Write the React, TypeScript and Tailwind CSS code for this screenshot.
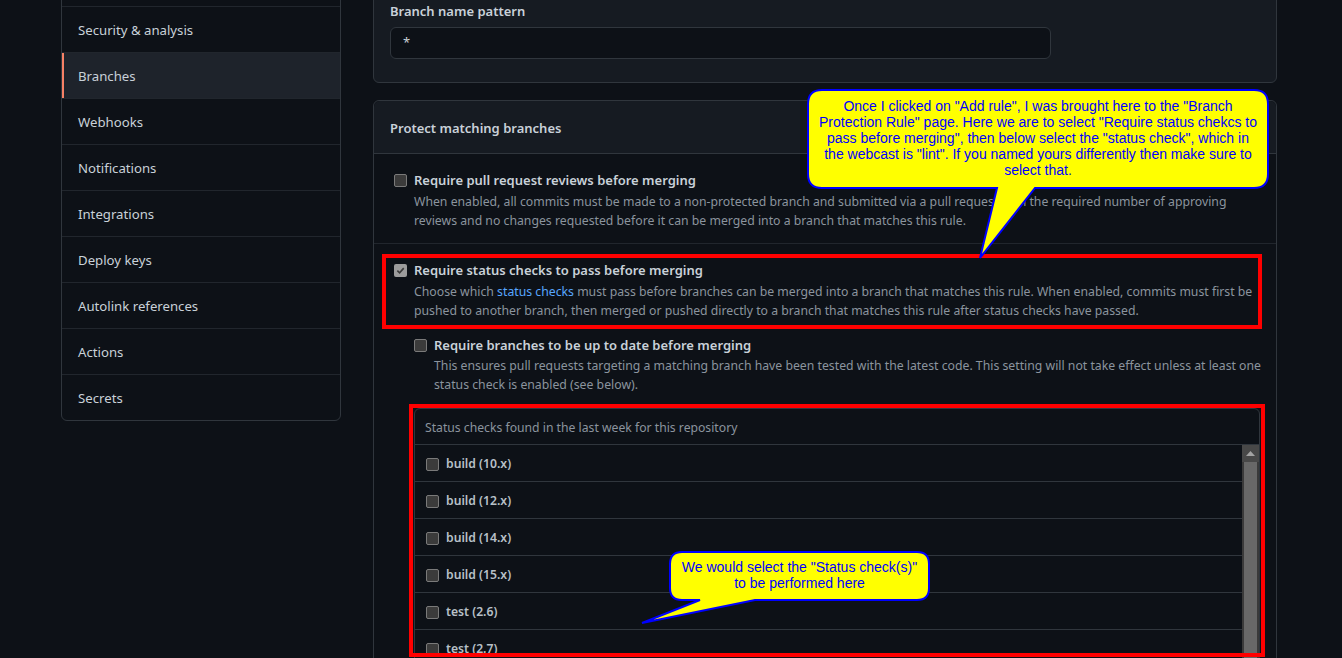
import React from "react";

const FONT = '"Noto Sans", "Open Sans", sans-serif';

function Box({ checked = false }: { checked?: boolean }) {
  if (checked) {
    return (
      <span className="flex h-[13px] w-[13px] shrink-0 items-center justify-center rounded-[2px] bg-[#9c9c9c]">
        <svg width="9" height="9" viewBox="0 0 10 10">
          <path d="M1.5 5.2 L4 7.6 L8.6 2.4" fill="none" stroke="#3a3a3a" strokeWidth="1.8" />
        </svg>
      </span>
    );
  }
  return <span className="block h-[13px] w-[13px] shrink-0 rounded-[2px] border border-[#7a7a7a] bg-[#3b3b3b]" />;
}

const sideItems = [
  "Security & analysis",
  "Branches",
  "Webhooks",
  "Notifications",
  "Integrations",
  "Deploy keys",
  "Autolink references",
  "Actions",
  "Secrets",
];

const checks = ["build (10.x)", "build (12.x)", "build (14.x)", "build (15.x)", "test (2.6)", "test (2.7)", "lint", "test (3.0)"];

export default function App() {
  return (
    <div className="relative h-[658px] overflow-hidden bg-[#0d1117] text-[#c9d1d9]" style={{ fontFamily: FONT }}>
      <div className="flex items-start gap-[32px] pl-[61px]">
        {/* Sidebar */}
        <nav className="mt-[-40px] w-[280px] shrink-0 overflow-hidden rounded-md border border-[#30363d]">
          <div className="h-[45px]" />
          {sideItems.map((s) => (
            <div
              key={s}
              className={`relative flex h-[46px] items-center border-t border-[#21262d] px-4 pt-[2px] text-[13.2px] ${
                s === "Branches" ? "bg-[#1e232b]" : ""
              }`}
            >
              {s === "Branches" && <span className="absolute bottom-0 left-0 top-0 w-[2px] bg-[#f78166]" />}
              {s}
            </div>
          ))}
        </nav>

        {/* Main */}
        <main className="mt-[-16px] w-[904px] shrink-0">
          <div className="rounded-b-md border border-[#30363d] bg-[#161b22] px-4 pb-[23px] pt-4">
            <div className="mb-[5px] text-[13px] font-semibold leading-[21px]">Branch name pattern</div>
            <div className="flex h-[32px] w-[661px] items-center rounded-md border border-[#30363d] bg-[#0d1117] px-3 text-[13px]">
              *
            </div>
          </div>

          <div className="mt-[17px] rounded-t-md border border-[#30363d]">
            <div className="flex h-[53px] items-center rounded-t-md border-b border-[#30363d] bg-[#161b22] px-4 pt-[4px] text-[13px] font-semibold">
              Protect matching branches
            </div>

            {/* Row 1 */}
            <div className="flex border-b border-[#21262d] pb-[13px] pl-5 pr-4 pt-4">
              <div className="mr-[7px] mt-[4px]">
                <Box />
              </div>
              <div className="min-w-0 flex-1">
                <div className="text-[13px] font-semibold leading-[21px]">Require pull request reviews before merging</div>
                <div className="mt-[1px] whitespace-nowrap text-[12.25px] leading-[19px] text-[#8b949e]">
                  <div>
                    When enabled, all commits must be made to a non-protected branch and submitted via a pull request with the required number of approving
                  </div>
                  <div>reviews and no changes requested before it can be merged into a branch that matches this rule.</div>
                </div>
              </div>
            </div>

            {/* Row 2 */}
            <div className="flex pl-5 pr-4 pt-[16px]">
              <div className="mr-[7px] mt-[4px]">
                <Box checked />
              </div>
              <div className="min-w-0 flex-1">
                <div className="text-[13px] font-semibold leading-[21px]">Require status checks to pass before merging</div>
                <div className="mt-[1px] whitespace-nowrap text-[12.25px] leading-[19px] text-[#8b949e]">
                  <div>
                    Choose which <span className="text-[#58a6ff]">status checks</span> must pass before branches can be merged into a branch that matches this rule. When enabled, commits must first be
                  </div>
                  <div>pushed to another branch, then merged or pushed directly to a branch that matches this rule after status checks have passed.</div>
                </div>

                <div className="mt-[15px] flex">
                  <div className="mr-[7px] mt-[4px]">
                    <Box />
                  </div>
                  <div className="min-w-0 flex-1">
                    <div className="text-[13px] font-semibold leading-[21px]">Require branches to be up to date before merging</div>
                    <div className="whitespace-nowrap text-[12.25px] leading-[19px] text-[#8b949e]">
                      <div>
                        This ensures pull requests targeting a matching branch have been tested with the latest code. This setting will not take effect unless at least one
                      </div>
                      <div>status check is enabled (see below).</div>
                    </div>
                  </div>
                </div>

                <div className="mt-[14px] rounded-md border border-[#30363d]">
                  <div className="flex h-[36px] items-center border-b border-[#30363d] pl-[10px] pt-[3px] text-[12.2px] text-[#8b949e]">
                    Status checks found in the last week for this repository
                  </div>
                  <div className="flex h-[300px]">
                    <div className="flex-1">
                      {checks.map((c) => (
                        <div key={c} className="flex h-[37px] items-center border-b border-[#30363d] pl-[11px] pt-[3px]">
                          <Box />
                          <span className="ml-[7px] text-[12.2px] font-semibold text-[#b8c0c8]">{c}</span>
                        </div>
                      ))}
                    </div>
                    <div className="flex w-[17px] flex-col bg-[#3a3a3a]">
                      <div className="flex h-[17px] items-center justify-center bg-[#484848]">
                        <svg width="9" height="5" viewBox="0 0 9 5">
                          <path d="M0 5 L4.5 0 L9 5 Z" fill="#a3a3a3" />
                        </svg>
                      </div>
                      <div className="mx-[2px] flex-1 bg-[#686868]" />
                    </div>
                  </div>
                </div>
              </div>
            </div>
          </div>
        </main>
      </div>

      {/* Red annotation boxes */}
      <div className="pointer-events-none absolute left-[382px] top-[254px] h-[75px] w-[880px] border-4 border-[#ff0000]" />
      <div className="pointer-events-none absolute left-[409px] top-[404px] h-[253px] w-[856px] border-4 border-[#ff0000]" />

      {/* Callouts */}
      <svg className="pointer-events-none absolute left-0 top-0" width="1342" height="658">
        <path
          d="M 822 90 H 1254 Q 1268 90 1268 104 V 174 Q 1268 188 1254 188 H 1035 L 980 258 L 997 188 H 822 Q 808 188 808 174 V 104 Q 808 90 822 90 Z"
          fill="#ffff00"
          stroke="#0000ff"
          strokeWidth="2"
        />
        <path
          d="M 682 552 H 917 Q 929 552 929 564 V 588 Q 929 600 917 600 H 755 L 642 623 L 700 600 H 682 Q 670 600 670 588 V 564 Q 670 552 682 552 Z"
          fill="#ffff00"
          stroke="#0000ff"
          strokeWidth="2"
        />
      </svg>
      <div
        className="pointer-events-none absolute left-[808px] top-[98px] w-[460px] text-center text-[14px] leading-[16px] text-[#0000ff]"
        style={{ fontFamily: '"Liberation Sans", Arial, sans-serif' }}
      >
        <div className="whitespace-nowrap">Once I clicked on "Add rule", I was brought here to the "Branch</div>
        <div className="whitespace-nowrap">Protection Rule" page. Here we are to select "Require status chekcs to</div>
        <div className="whitespace-nowrap">pass before merging", then below select the "status check", which in</div>
        <div className="whitespace-nowrap">the webcast is "lint". If you named yours differently then make sure to</div>
        <div className="whitespace-nowrap">select that.</div>
      </div>
      <div
        className="pointer-events-none absolute left-[670px] top-[559px] w-[259px] text-center text-[14px] leading-[16px] text-[#0000ff]"
        style={{ fontFamily: '"Liberation Sans", Arial, sans-serif' }}
      >
        <div className="whitespace-nowrap">We would select the "Status check(s)"</div>
        <div className="whitespace-nowrap">to be performed here</div>
      </div>
    </div>
  );
}
